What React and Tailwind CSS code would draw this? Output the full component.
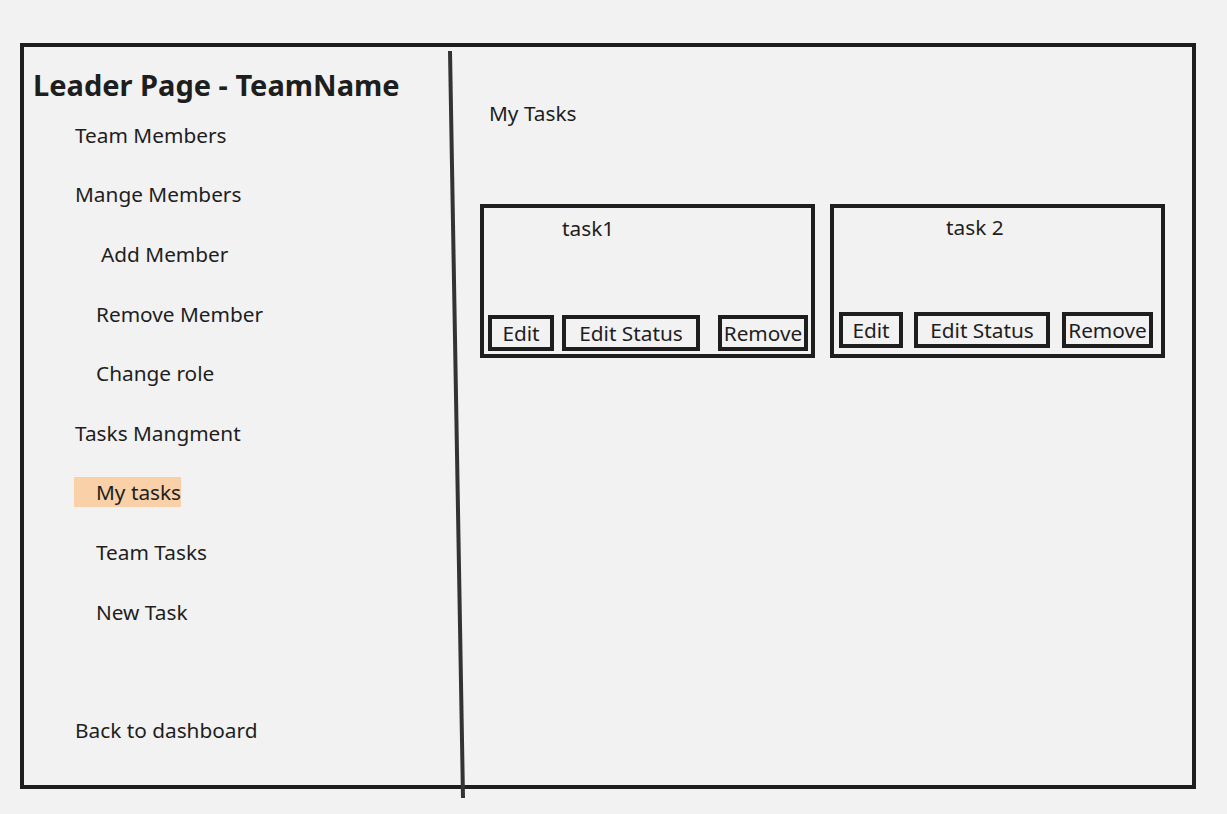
import React from "react";

function NavItem({ children, indent }) {
  return (
    <div className={`h-[59.6px] flex items-center ${indent}`}>
      <span className="text-[20.8px] leading-[28px]">{children}</span>
    </div>
  );
}

function Btn({ children, className }) {
  return (
    <div
      className={`border-4 border-[#1e1e1e] h-[36px] flex items-center justify-center text-[20.8px] leading-[28px] whitespace-nowrap ${className}`}
    >
      {children}
    </div>
  );
}

export default function App() {
  return (
    <div
      className="w-[1227px] h-[814px] bg-[#f2f2f2] text-[#1e1e1e] pt-[43px] pl-[20px] overflow-hidden"
      style={{ fontFamily: '"Noto Sans", "Open Sans", sans-serif' }}
    >
      <div className="relative w-[1176px] h-[746px] border-4 border-[#1e1e1e] flex">
        {/* Sidebar */}
        <div className="w-[426px] shrink-0 flex flex-col pt-[18px]">
          <div className="pl-[9px] h-[40px] flex items-center">
            <span className="text-[29px] leading-[38px] font-bold whitespace-nowrap">Leader Page - TeamName</span>
          </div>
          <div className="pl-[51px]">
            <NavItem indent="">Team Members</NavItem>
            <NavItem indent="">Mange Members</NavItem>
            <NavItem indent="pl-[26px]">Add Member</NavItem>
            <NavItem indent="pl-[21px]">Remove Member</NavItem>
            <NavItem indent="pl-[21px]">Change role</NavItem>
            <NavItem indent="">Tasks Mangment</NavItem>
            <div className="h-[59.6px] flex items-center">
              <span className="w-[107px] h-[30px] bg-[#f9d0a8] pl-[22px] text-[20.8px] leading-[30px] -ml-[1px] whitespace-nowrap">
                My tasks
              </span>
            </div>
            <NavItem indent="pl-[21px]">Team Tasks</NavItem>
            <NavItem indent="pl-[21px]">New Task</NavItem>
            <div className="h-[59.6px] mt-[58.4px] flex items-center">
              <span className="text-[20.8px] leading-[28px]">Back to dashboard</span>
            </div>
          </div>
        </div>

        {/* Main */}
        <div className="flex-1 pl-[30px] pt-[52px] flex flex-col">
          <div className="ml-[9px] text-[20.8px] leading-[28px]">My Tasks</div>
          <div className="mt-[77px] flex gap-[15px]">
            {/* Card 1 */}
            <div className="w-[335px] h-[154px] border-4 border-[#1e1e1e] flex flex-col">
              <div className="pl-[78px] pt-[6px] text-[20.8px] leading-[28px]">task1</div>
              <div className="mt-auto mb-[3px] flex pl-[4px]">
                <Btn className="w-[66px]">Edit</Btn>
                <Btn className="w-[138px] ml-[8px]">Edit Status</Btn>
                <Btn className="w-[90px] ml-[18px]">Remove</Btn>
              </div>
            </div>
            {/* Card 2 */}
            <div className="w-[335px] h-[154px] border-4 border-[#1e1e1e] flex flex-col">
              <div className="pl-[112px] pt-[5px] text-[20.8px] leading-[28px]">task 2</div>
              <div className="mt-auto mb-[6px] flex pl-[5px]">
                <Btn className="w-[64px] h-[35px]">Edit</Btn>
                <Btn className="w-[136px] h-[35px] ml-[11px]">Edit Status</Btn>
                <Btn className="w-[91px] h-[35px] ml-[12px]">Remove</Btn>
              </div>
            </div>
          </div>
        </div>

        {/* Slanted divider drawn over the frame */}
        <svg
          className="absolute left-[-24px] top-[-47px] pointer-events-none"
          width="1227"
          height="814"
          viewBox="0 0 1227 814"
        >
          <line x1="450" y1="51" x2="463" y2="798" stroke="#333333" strokeWidth="4" />
        </svg>
      </div>
    </div>
  );
}
